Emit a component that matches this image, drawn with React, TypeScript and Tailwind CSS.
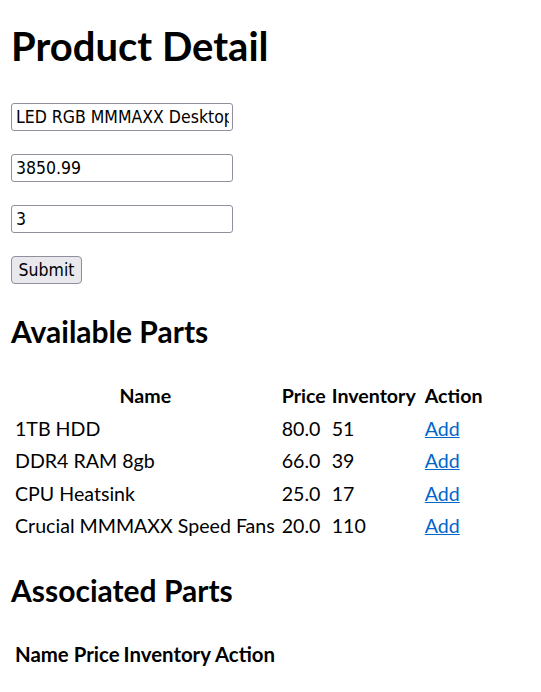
const availableParts = [
  { name: "1TB HDD", price: "80.0", inv: "51" },
  { name: "DDR4 RAM 8gb", price: "66.0", inv: "39" },
  { name: "CPU Heatsink", price: "25.0", inv: "17" },
  { name: "Crucial MMMAXX Speed Fans", price: "20.0", inv: "110" },
];

const inputCls =
  "block w-[222px] h-[28px] pl-[4px] pr-[3px] rounded-[3px] border border-[#8f8f9d] bg-white text-[17.5px] text-black outline-none [font-family:'DejaVu_Sans_Condensed','Noto_Sans',sans-serif]";

export default function App() {
  return (
    <div className="min-h-[692px] bg-white px-[11px] text-black [font-family:Lato,'Noto_Sans',sans-serif]">
      <h1 className="pt-[22px] text-[40px] font-bold leading-[48px]">Product Detail</h1>

      <form className="mt-[33px] flex flex-col gap-[23px]">
        <input className={inputCls} defaultValue="LED RGB MMMAXX Desktop" />
        <input className={inputCls} defaultValue="3850.99" />
        <input className={inputCls} defaultValue="3" />
        <div>
          <button
            type="button"
            className="h-[28px] w-[71px] rounded-[4px] border border-[#8f8f9d] bg-[#e9e9ed] text-[17.5px] text-black [font-family:'DejaVu_Sans_Condensed','Noto_Sans',sans-serif]"
          >
            Submit
          </button>
        </div>
      </form>

      <h2 className="mt-[29px] text-[30px] font-bold leading-[36px]">Available Parts</h2>

      <table className="mt-[29px] border-separate border-spacing-[2px] whitespace-nowrap text-[19.6px]">
        <thead>
          <tr className="h-[31px]">
            <th className="px-[1px] font-bold">Name</th>
            <th className="px-[2px] font-bold">Price</th>
            <th className="pl-[2px] pr-[5px] font-bold">Inventory</th>
            <th className="px-[2px] font-bold">Action</th>
          </tr>
        </thead>
        <tbody>
          {availableParts.map((p) => (
            <tr key={p.name} className="h-[30.5px]">
              <td className="pl-[2px] pr-[3px]">{p.name}</td>
              <td className="px-[2px]">{p.price}</td>
              <td className="pl-[2px] pr-[5px]">{p.inv}</td>
              <td className="px-[2px]">
                <a href="#" className="text-[#0066cc] underline">
                  Add
                </a>
              </td>
            </tr>
          ))}
        </tbody>
      </table>

      <h2 className="mt-[29px] text-[30px] font-bold leading-[36px]">Associated Parts</h2>

      <table className="mt-[29px] border-separate border-spacing-[2px] whitespace-nowrap text-[20.4px]">
        <thead>
          <tr className="h-[31px]">
            <th className="px-[2px] font-bold">Name</th>
            <th className="px-[1px] font-bold">Price</th>
            <th className="px-[1px] font-bold">Inventory</th>
            <th className="px-[1px] font-bold">Action</th>
          </tr>
        </thead>
        <tbody></tbody>
      </table>
    </div>
  );
}
